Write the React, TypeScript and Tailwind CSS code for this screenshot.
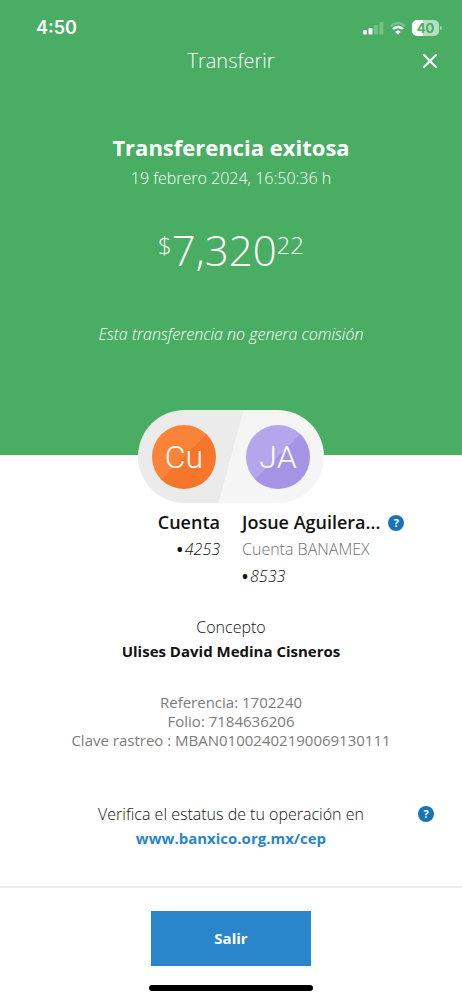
import { X } from "lucide-react";

const details = [
  "Referencia: 1702240",
  "Folio: 7184636206",
  "Clave rastreo : MBAN01002402190069130111",
];

function HelpButton({ label }: { label: string }) {
  return (
    <button
      type="button"
      aria-label={label}
      className="flex size-4 shrink-0 items-center justify-center rounded-full bg-[#1973b8] text-[11px] font-bold leading-4 text-white"
    >
      ?
    </button>
  );
}

function StatusBar() {
  return (
    <div className="flex h-10 items-center justify-between pt-4 pr-5 pl-9">
      <span className="font-['Inter'] text-lg font-semibold leading-6">4:50</span>
      <div className="flex items-center gap-1.5">
        <svg width="22" height="14" viewBox="0 0 22 14" fill="#fff" aria-hidden="true">
          <rect x="1" y="9" width="4" height="4.5" rx="1" />
          <rect x="6.5" y="7" width="4" height="6.5" rx="1" />
          <rect x="12" y="4" width="3.8" height="9.5" rx="1" opacity="0.25" />
          <rect x="17.5" y="1" width="3.8" height="12.5" rx="1" opacity="0.25" />
        </svg>
        <svg width="16" height="13" viewBox="0 0 16 13" fill="none" stroke="#fff" strokeWidth="2.4" aria-hidden="true">
          <path d="M0.8 4.1a10.3 10.3 0 0 1 14.4 0" opacity="0.25" />
          <path d="M3 7a7.2 7.2 0 0 1 10 0" />
          <path d="M5.2 9.8a4 4 0 0 1 5.6 0L8 12.8z" fill="#fff" stroke="none" />
        </svg>
        <div className="flex items-center gap-px">
          <span className="flex h-4 w-[27px] items-center justify-center rounded-[5px] bg-linear-to-r from-white from-40% to-white/60 to-40% font-['Inter'] text-[13px] font-bold leading-4 text-[#49ae64]">
            40
          </span>
          <span className="h-1 w-0.5 rounded-r-full bg-white/50" />
        </div>
      </div>
    </div>
  );
}

function AccountPill() {
  return (
    <div className="mx-auto -mt-[45px] flex h-[93px] w-[186px] items-center justify-between rounded-full bg-[linear-gradient(105deg,#ebebeb_50%,#f5f5f5_50%)] px-3.5 font-['Roboto'] text-[32px] font-light text-white">
      <span className="flex size-16 items-center justify-center rounded-full bg-[linear-gradient(135deg,#f98438_50%,#f6762c_50%)]">
        Cu
      </span>
      <span className="flex size-16 items-center justify-center rounded-full bg-[linear-gradient(135deg,#b3a6ec_50%,#a594e6_50%)]">
        JA
      </span>
    </div>
  );
}

function AccountNumber({ digits }: { digits: string }) {
  return (
    <p className="font-light italic leading-[27px]">
      <span className="mr-0.5 font-bold not-italic">•</span>
      {digits}
    </p>
  );
}

export default function App() {
  return (
    <div className="flex min-h-screen flex-col bg-white font-['Open_Sans',sans-serif] text-base text-[#121212]">
      <header className="bg-[#49ae64] pb-[109px] text-center text-white">
        <StatusBar />
        <div className="grid h-[42px] grid-cols-[1fr_auto_1fr] items-center px-5">
          <span className="col-start-2 text-xl font-light">Transferir</span>
          <button type="button" aria-label="Cerrar" className="justify-self-end">
            <X size={24} strokeWidth={2} />
          </button>
        </div>
        <h1 className="mt-12 text-[22px] font-bold leading-[34px]">Transferencia exitosa</h1>
        <p className="font-light leading-7">19 febrero 2024, 16:50:36 h</p>
        <p className="mt-8 flex h-[52px] justify-center font-light">
          <span className="text-2xl leading-[42px]">$</span>
          <span className="text-[42px] leading-[52px]">7,320</span>
          <span className="text-2xl leading-[42px]">22</span>
        </p>
        <p className="mt-[46px] font-light italic leading-6">Esta transferencia no genera comisión</p>
      </header>

      <main className="text-center">
        <AccountPill />
        <div className="mt-1.5 grid grid-cols-2 gap-[22px]">
          <div className="text-right">
            <h2 className="text-lg font-semibold leading-[27px]">Cuenta</h2>
            <AccountNumber digits="4253" />
          </div>
          <div className="text-left">
            <div className="flex items-center gap-2">
              <h2 className="text-lg font-semibold leading-[27px]">Josue Aguilera...</h2>
              <HelpButton label="Ayuda sobre el beneficiario" />
            </div>
            <p className="font-light leading-[27px] text-[#707070]">Cuenta BANAMEX</p>
            <AccountNumber digits="8533" />
          </div>
        </div>

        <section className="mt-[25px] leading-6">
          <p className="font-light">Concepto</p>
          <p className="text-[15px] font-bold leading-6">Ulises David Medina Cisneros</p>
        </section>

        <section className="mt-[30px] text-[15px] leading-[19px] text-[#7c7c7c]">
          {details.map((line) => (
            <p key={line}>{line}</p>
          ))}
        </section>

        <section className="mt-[52px] grid grid-cols-[1fr_auto_1fr] items-center px-7 leading-6">
          <p className="col-start-2 font-light">Verifica el estatus de tu operación en</p>
          <div className="flex justify-end">
            <HelpButton label="Ayuda sobre el estatus" />
          </div>
          <a href="#cep" className="col-start-2 text-[15px] font-bold leading-6 text-[#2a86ca]">
            www.banxico.org.mx/cep
          </a>
        </section>
      </main>

      <footer className="mt-auto flex flex-col items-center border-t-2 border-[#ececec] pt-[23px] pb-[9px]">
        <button type="button" className="h-[55px] w-40 bg-[#2a86ca] text-[15px] font-bold text-white">
          Salir
        </button>
        <div className="mt-[19px] h-1.5 w-[164px] rounded-full bg-black" />
      </footer>
    </div>
  );
}
